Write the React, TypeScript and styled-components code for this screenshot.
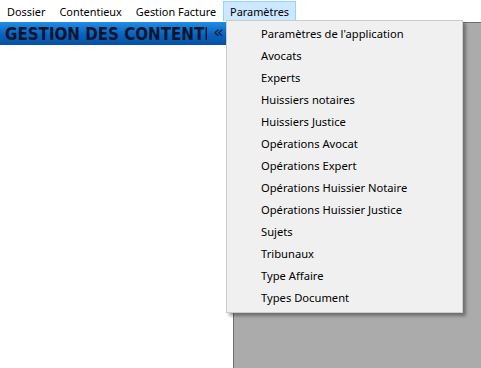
import React from "react";
import styled, { createGlobalStyle } from "styled-components";

const Global = createGlobalStyle`
  html, body { margin: 0; padding: 0; background: #ffffff; }
  body { font-family: "Noto Sans", "Segoe UI", sans-serif; }
`;

const Window = styled.div`
  position: relative;
  width: 481px;
  height: 368px;
  display: flex;
  flex-direction: column;
  overflow: hidden;
  background: #ffffff;
`;

const MenuBar = styled.div`
  height: 20px;
  display: flex;
  align-items: stretch;
  background: #ffffff;
  padding-top: 1px;
`;

const MenuItem = styled.div<{ $active?: boolean }>`
  display: flex;
  align-items: center;
  padding: 0 ${(p) => (p.$active ? 6 : 7)}px;
  font-size: 10.9px;
  color: #000;
  white-space: nowrap;
  background: ${(p) => (p.$active ? "#cce8ff" : "transparent")};
  border: ${(p) => (p.$active ? "1px solid #99d1ff" : "none")};
  border-bottom: none;
`;

const Body = styled.div`
  flex: 1;
  display: flex;
  margin-top: 1px;
`;

const LeftPane = styled.div`
  width: 233px;
  display: flex;
  flex-direction: column;
  background: #ffffff;
`;

const Header = styled.div`
  height: 23px;
  display: flex;
  align-items: center;
  background: linear-gradient(#1f8de6, #0a62bd 55%, #0550a4);
  padding-left: 5px;
`;

const HeaderTitle = styled.div`
  width: 202px;
  overflow: hidden;
  white-space: nowrap;
  font-family: "DejaVu Sans Condensed", "DejaVu Sans", sans-serif;
  font-stretch: condensed;
  font-weight: bold;
  font-size: 16.8px;
  color: #05152e;
`;

const Collapse = styled.div`
  margin-left: 6px;
  font-family: "DejaVu Sans", sans-serif;
  font-size: 18px;
  color: #0a1c3c;
  line-height: 1;
  margin-top: -3px;
`;

const Workspace = styled.div`
  flex: 1;
  background: #ababab;
  border-top: 1px solid #6e6e6e;
  border-left: 1px solid #6e6e6e;
`;

const Dropdown = styled.div`
  position: absolute;
  left: 226px;
  top: 20px;
  width: 233px;
  padding: 1px 0 4px 2px;
  background: #f0f0f0;
  border: 1px solid #cccccc;
  box-shadow: 3px 3px 3px rgba(0, 0, 0, 0.35);
`;

const DropItem = styled.div`
  height: 22px;
  display: flex;
  align-items: center;
  padding-left: 32px;
  font-size: 11.2px;
  color: #000;
  white-space: nowrap;
`;

const items = [
  "Paramètres de l'application",
  "Avocats",
  "Experts",
  "Huissiers notaires",
  "Huissiers Justice",
  "Opérations Avocat",
  "Opérations Expert",
  "Opérations Huissier Notaire",
  "Opérations Huissier Justice",
  "Sujets",
  "Tribunaux",
  "Type Affaire",
  "Types Document",
];

export default function App() {
  return (
    <>
      <Global />
      <Window>
        <MenuBar>
          <MenuItem>Dossier</MenuItem>
          <MenuItem>Contentieux</MenuItem>
          <MenuItem>Gestion Facture</MenuItem>
          <MenuItem $active>Paramètres</MenuItem>
        </MenuBar>
        <Body>
          <LeftPane>
            <Header>
              <HeaderTitle>GESTION DES CONTENTIEUX</HeaderTitle>
              <Collapse>«</Collapse>
            </Header>
          </LeftPane>
          <Workspace />
        </Body>
        <Dropdown>
          {items.map((t) => (
            <DropItem key={t}>{t}</DropItem>
          ))}
        </Dropdown>
      </Window>
    </>
  );
}
